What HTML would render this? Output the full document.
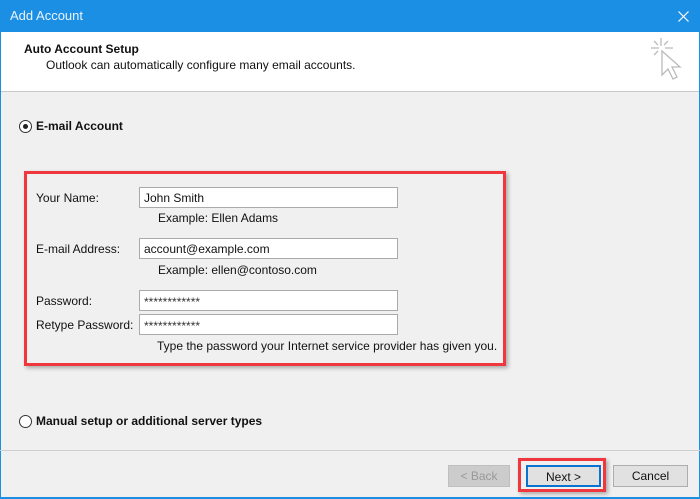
<!DOCTYPE html>
<html><head><style>
*{margin:0;padding:0;box-sizing:border-box}
body{width:700px;height:499px;position:relative;overflow:hidden;font-family:"Liberation Sans",sans-serif;font-size:12px;color:#111;background:#f0f0f0}
.a{position:absolute;white-space:nowrap}
.inp{position:absolute;background:#fff;border:1px solid #aaa;height:21px;padding:3px 4px;font-size:12px}
.btn{position:absolute;height:22px;border:1px solid #adadad;background:#e1e1e1;text-align:center;line-height:20px;font-size:12px}
.radio{position:absolute;width:13px;height:13px;border:1px solid #333;border-radius:50%;background:#fff}
</style></head><body>
<div class="a" style="left:0;top:0;width:700px;height:32px;background:#1b8fe4"></div>
<div class="a" style="left:10px;top:8px;color:#eaf4fd;font-size:13px">Add Account</div>
<svg class="a" style="left:678px;top:11px" width="11" height="11" viewBox="0 0 11 11" stroke="#fff" stroke-width="1.2"><path d="M0.5 0.5L10.5 10.5M10.5 0.5L0.5 10.5"/></svg>
<div class="a" style="left:0;top:32px;width:700px;height:59px;background:#fff"></div>
<div class="a" style="left:0;top:91px;width:700px;height:1px;background:#c8c8c8"></div>
<div class="a" style="left:24px;top:42px;font-weight:bold">Auto Account Setup</div>
<div class="a" style="left:46px;top:58px">Outlook can automatically configure many email accounts.</div>
<svg class="a" style="left:648px;top:36px" width="40" height="52" viewBox="0 0 40 52" fill="none" stroke="#bbb" stroke-width="1.3">
<path d="M13 2v8M3 12h8M17 12h8M6 5l4 4M20 5l-4 4M6 19l4-4"/>
<path d="M14 15l0 24l6-6l5 10l4-2l-5-10l8 0z" fill="#fff"/>
</svg>
<div class="a" style="left:0;top:32px;width:1px;height:467px;background:#1b8fe4"></div>
<div class="a" style="left:699px;top:32px;width:1px;height:467px;background:#1b8fe4"></div>
<div class="a" style="left:0;top:497px;width:700px;height:2px;background:#1b8fe4"></div>
<div class="radio" style="left:19px;top:120px"><div style="position:absolute;left:3px;top:3px;width:5px;height:5px;border-radius:50%;background:#222"></div></div>
<div class="a" style="left:36px;top:119px;font-weight:bold">E-mail Account</div>
<div class="a" style="left:24px;top:171px;width:482px;height:195px;border:3px solid #f0373d;box-shadow:2px 2px 4px rgba(0,0,0,.3)"></div>
<div class="a" style="left:36px;top:191px">Your Name:</div>
<div class="inp" style="left:139px;top:187px;width:259px">John Smith</div>
<div class="a" style="left:158px;top:211px">Example: Ellen Adams</div>
<div class="a" style="left:36px;top:242px">E-mail Address:</div>
<div class="inp" style="left:139px;top:238px;width:259px">account@example.com</div>
<div class="a" style="left:158px;top:263px">Example: ellen@contoso.com</div>
<div class="a" style="left:36px;top:294px">Password:</div>
<div class="inp" style="left:139px;top:290px;width:259px;font-size:12px;padding-top:4px;color:#333">************</div>
<div class="a" style="left:36px;top:318px">Retype Password:</div>
<div class="inp" style="left:139px;top:314px;width:259px;font-size:12px;padding-top:4px;color:#333">************</div>
<div class="a" style="left:157px;top:339px">Type the password your Internet service provider has given you.</div>
<div class="radio" style="left:19px;top:415px"></div>
<div class="a" style="left:36px;top:414px;font-weight:bold">Manual setup or additional server types</div>
<div class="a" style="left:0;top:450px;width:700px;height:1px;background:#cfcfcf"></div>
<div class="btn" style="left:448px;top:465px;width:62px;color:#999;background:#ccc;border-color:#bfbfbf">&lt; Back</div>
<div class="a" style="left:518px;top:458px;width:88px;height:34px;border:3px solid #f0373d;box-shadow:2px 2px 4px rgba(0,0,0,.3)"></div>
<div class="btn" style="left:526px;top:465px;width:75px;border:2px solid #0a73d0">Next &gt;</div>
<div class="btn" style="left:613px;top:465px;width:75px">Cancel</div>
</body></html>
